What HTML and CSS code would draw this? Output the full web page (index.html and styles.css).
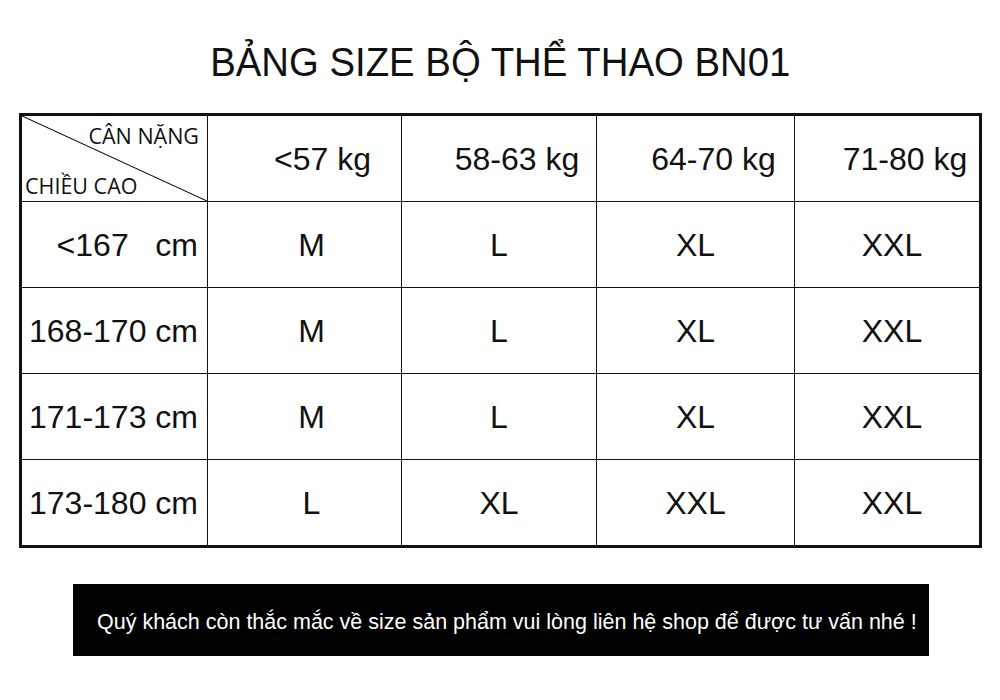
FILE: index.html
```html
<!DOCTYPE html>
<html lang="vi">
<head>
<meta charset="utf-8">
<title>Bảng size bộ thể thao BN01</title>
<link rel="stylesheet" href="styles.css">
</head>
<body>
<div class="page">
  <h1 class="title"><span class="title-text">BẢNG SIZE BỘ THỂ THAO BN01</span></h1>
  <table class="size-table">
    <colgroup>
      <col class="c1"><col class="c2"><col class="c3"><col class="c4"><col class="c5">
    </colgroup>
    <tr class="head-row">
      <td class="corner">
        <svg class="diag" viewBox="0 0 100 100" preserveAspectRatio="none" aria-hidden="true">
          <line x1="0" y1="0" x2="100" y2="100" stroke="#000" stroke-width="1" vector-effect="non-scaling-stroke"/>
        </svg>
        <div class="corner-inner">
          <span class="lbl-top">CÂN NẶNG</span>
          <span class="lbl-bot">CHIỀU CAO</span>
        </div>
      </td>
      <td>&lt;57 kg</td>
      <td>58-63 kg</td>
      <td>64-70 kg</td>
      <td>71-80 kg</td>
    </tr>
    <tr>
      <td class="h"><span class="pre">&lt;167   cm</span></td>
      <td>M</td><td>L</td><td>XL</td><td>XXL</td>
    </tr>
    <tr>
      <td class="h">168-170 cm</td>
      <td>M</td><td>L</td><td>XL</td><td>XXL</td>
    </tr>
    <tr>
      <td class="h">171-173 cm</td>
      <td>M</td><td>L</td><td>XL</td><td>XXL</td>
    </tr>
    <tr>
      <td class="h">173-180 cm</td>
      <td>L</td><td>XL</td><td>XXL</td><td>XXL</td>
    </tr>
  </table>
  <div class="note">Quý khách còn thắc mắc về size sản phẩm vui lòng liên hệ shop để được tư vấn nhé !</div>
</div>
</body>
</html>
```

FILE: styles.css
```css
html, body {
  margin: 0;
  padding: 0;
  background: #fff;
}
.page {
  width: 1000px;
  height: 700px;
  padding-top: 36px;
  box-sizing: border-box;
  font-family: "Liberation Sans", Arial, sans-serif;
  color: #111;
}
.title {
  margin: 0;
  text-align: center;
  font-weight: normal;
  font-size: 41px;
  line-height: 52px;
  height: 52px;
  color: #111;
}
.title-text {
  display: inline-block;
  transform: scaleX(0.935);
}
.size-table {
  margin: 25px 0 0 19px;
  width: 960px;
  border-collapse: collapse;
  border: 3px solid #111;
  table-layout: fixed;
}
.c1 { width: 187px; }
.c2 { width: 194px; }
.c3 { width: 195px; }
.c4 { width: 198px; }
.c5 { width: 186px; }
.size-table td {
  border: 1px solid #111;
  height: 85px;
  padding: 0;
  text-align: center;
  vertical-align: middle;
  font-size: 32px;
  line-height: 1;
  white-space: nowrap;
}
.size-table td:nth-child(2) { padding-left: 14px; }
.size-table td:nth-child(5) { padding-left: 10px; }
.head-row td { padding-left: 36px; }
.head-row td:nth-child(2),
.head-row td:nth-child(5) { padding-left: 36px; }
.size-table td.h {
  text-align: right;
  padding: 0 9px 0 0;
}
.pre { white-space: pre; }
.size-table td.corner {
  position: relative;
  padding: 0;
  text-align: left;
}
.diag {
  position: absolute;
  left: 0;
  top: 0;
  width: 100%;
  height: 100%;
}
.corner-inner {
  height: 85px;
  display: flex;
  flex-direction: column;
  justify-content: space-between;
  padding: 6px 8px 1px 3px;
  box-sizing: border-box;
  font-family: "Open Sans", "Noto Sans", sans-serif;
  font-size: 21.5px;
  line-height: 28px;
}
.lbl-top { align-self: flex-end; }
.lbl-bot { align-self: flex-start; }
.note {
  margin: 36px 0 0 73px;
  width: 856px;
  height: 72px;
  background: #000;
  color: #fff;
  display: flex;
  align-items: center;
  padding: 4px 0 0 24px;
  box-sizing: border-box;
  font-size: 21.5px;
}
```
